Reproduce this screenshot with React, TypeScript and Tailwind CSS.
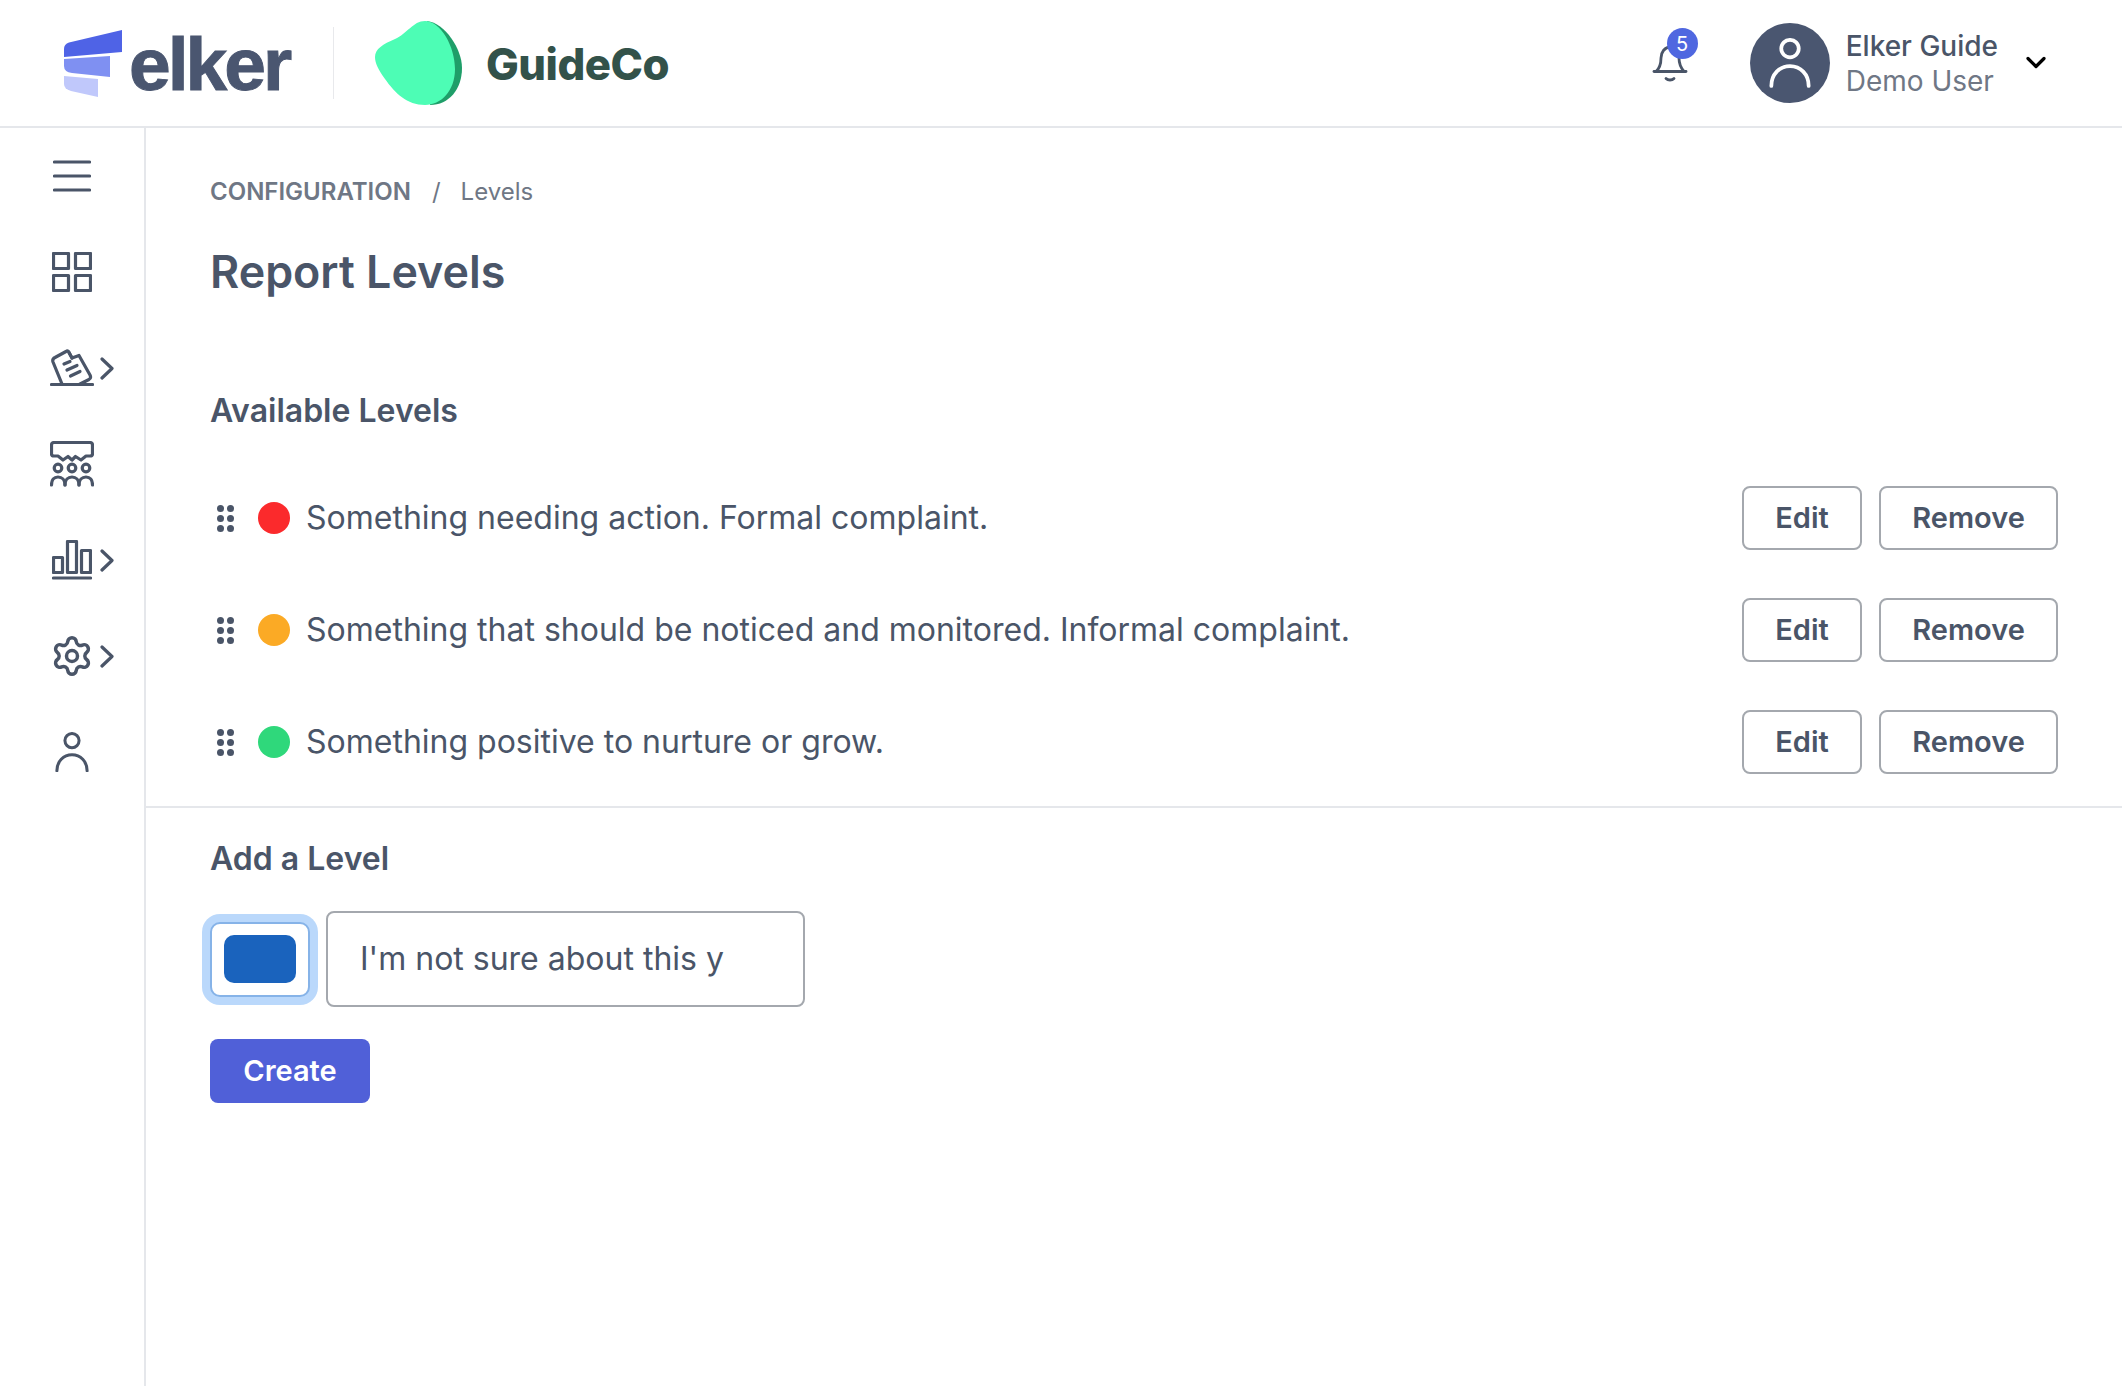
import * as React from 'react'
import { Settings } from 'lucide-react'

const levels = [
  { color: 'bg-[#fb2a2c]', label: 'Something needing action. Formal complaint.' },
  { color: 'bg-[#fbaa25]', label: 'Something that should be noticed and monitored. Informal complaint.' },
  { color: 'bg-[#2fd87b]', label: 'Something positive to nurture or grow.' },
]

const ink = '#4a5568'

function ElkerMark() {
  return (
    <svg width="58" height="67" viewBox="0 0 58 67" className="shrink-0">
      <path d="M58 0V22L0 27V19Q0 14 5 12.500Z" fill="#4f63e6" />
      <path d="M0 29L46 26V47L8 43Q0 42 0 36Z" fill="#7f90f2" />
      <path d="M0 46L34 49V67L7 61Q0 59 0 54Z" fill="#c0c8fb" />
    </svg>
  )
}

function Leaf() {
  return (
    <svg width="87" height="84" viewBox="0 0 87 84" className="shrink-0">
      <path d="M52 0C70 2 87 28 87 47C87 68 74 84 55 84Z" fill="#1f9e69" />
      <path d="M50 0C66 0 80 26 80 48C80 70 66 84 50 84C32 84 20 72 10 58C3 48 0 42 0 36C0 28 8 23 20 18C32 13 38 0 50 0Z" fill="#4dfdb5" />
    </svg>
  )
}

function Bell() {
  return (
    <svg width="36" height="36" viewBox="0 0 36 36" fill="none" stroke={ink} strokeWidth="2.800" strokeLinecap="round" strokeLinejoin="round">
      <path d="M2 25.500H34" />
      <path d="M4 25.500C8 22 9 18 9 12C9 6 13 1 18 1C23 1 27 6 27 12C27 18 29 22 32 25.500" />
      <path d="M14 32.500C16 34.500 20 34.500 22 32.500" />
    </svg>
  )
}

function PersonIcon({ size = 36, color = ink, width = 3.2 }: { size?: number; color?: string; width?: number }) {
  return (
    <svg width={size} height={size * 1.2} viewBox="0 0 36 43" fill="none" stroke={color} strokeWidth={width} strokeLinecap="round">
      <circle cx="18" cy="9" r="7.500" />
      <path d="M2 41C2 31 9 24 18 24C27 24 34 31 34 41" />
    </svg>
  )
}

function Chevron() {
  return (
    <svg width="14" height="23" viewBox="0 0 14 23" fill="none" stroke={ink} strokeWidth="3.200" strokeLinecap="round" strokeLinejoin="round" className="ml-[4px] shrink-0">
      <path d="M2 2L12 11.500L2 21" />
    </svg>
  )
}

function Hamburger() {
  return (
    <svg width="38" height="32" viewBox="0 0 38 32" fill="none" stroke={ink} strokeWidth="3.200" strokeLinecap="round">
      <path d="M1.500 2H36.500M1.500 16H36.500M1.500 30H36.500" />
    </svg>
  )
}

function GridIcon() {
  return (
    <svg width="40" height="40" viewBox="0 0 40 40" fill="none" stroke={ink} strokeWidth="3.200" strokeLinejoin="round">
      <rect x="1.500" y="1.500" width="15" height="15" />
      <rect x="23.500" y="1.500" width="15" height="15" />
      <rect x="1.500" y="23.500" width="15" height="15" />
      <rect x="23.500" y="23.500" width="15" height="15" />
    </svg>
  )
}

function DocIcon() {
  return (
    <svg width="44" height="38" viewBox="0 0 44 38" fill="none" stroke={ink} strokeWidth="3.200" strokeLinecap="round" strokeLinejoin="round">
      <path d="M1.500 35.500H42.500" />
      <path d="M12 35L3 13Q2 10 5 8.500L16 2.500Q18 1 19 3.500L22 9L29 6.500L40 26Q41.500 29 39 30.500L30 35" />
      <path d="M19 3.500L22 9" />
      <path d="M14 15L20 12.500M17 21L27 16.500M20.500 27L30 22.500" />
    </svg>
  )
}

function CrowdIcon() {
  return (
    <svg width="44" height="46" viewBox="0 0 44 46" fill="none" stroke={ink} strokeWidth="3.200" strokeLinecap="round" strokeLinejoin="round">
      <path d="M4 1.500H40Q42.500 1.500 42.500 4V13Q42.500 15 40 15H36L31 19L25.500 15.500L22 19L18 15.500L13 19L8 15H4Q1.500 15 1.500 13V4Q1.500 1.500 4 1.500Z" />
      <circle cx="8" cy="27" r="3.800" />
      <circle cx="22" cy="27" r="3.800" />
      <circle cx="36" cy="27" r="3.800" />
      <path d="M1.500 44C1.500 39 4 36 8 36C12 36 15 39 15 44" />
      <path d="M15 44C15 39 18 36 22 36C26 36 29 39 29 44" />
      <path d="M29 44C29 39 32 36 36 36C40 36 42.500 39 42.500 44" />
    </svg>
  )
}

function BarsIcon() {
  return (
    <svg width="40" height="40" viewBox="0 0 40 40" fill="none" stroke={ink} strokeWidth="3.200" strokeLinecap="round" strokeLinejoin="round">
      <rect x="1.500" y="17.500" width="9" height="15" />
      <rect x="15.500" y="1.500" width="9" height="31" />
      <rect x="29.500" y="10.500" width="9" height="22" />
      <path d="M1.500 38H38.500" />
    </svg>
  )
}

function DragDots() {
  return (
    <div className="grid grid-cols-[7px_7px] gap-[3px] shrink-0">
      {[0, 1, 2, 3, 4, 5].map(i => (
        <span key={i} className="h-[7px] w-[7px] rounded-full bg-[#4a5568]" />
      ))}
    </div>
  )
}

function NavItem({ children, arrow }: { children: React.ReactNode; arrow?: boolean }) {
  return (
    <div className="flex h-[96px] items-center pl-[48px]">
      <div className="flex w-[48px] shrink-0 items-center justify-center">{children}</div>
      {arrow && <Chevron />}
    </div>
  )
}

export default function App() {
  const [text, setText] = React.useState("I'm not sure about this y")

  return (
    <div className="flex h-screen flex-col overflow-hidden bg-white font-['Inter',sans-serif] text-[#4a5568]">
      <header className="flex h-[128px] shrink-0 items-center border-b-2 border-[#e5e7eb] pl-[64px]">
        <ElkerMark />
        <span className="mt-[2px] ml-[7px] w-[164px] font-['Liberation_Sans',sans-serif] text-[75px] leading-none font-bold tracking-[-3px] text-[#4a5670] [-webkit-text-stroke:1px_#4a5670]">elker</span>
        <div className="ml-[40px] h-[72px] w-[1px] bg-[#e8e9ec]" />
        <div className="ml-[41px]"><Leaf /></div>
        <span className="mt-[3px] ml-[24px] text-[43.700px] leading-none font-extrabold tracking-[-0.5px] text-[#33524a]">GuideCo</span>

        <div className="relative mt-[2px] ml-auto h-[36px] w-[36px]">
          <Bell />
          <span className="absolute top-[-18px] left-[15px] flex h-[31px] w-[31px] items-center justify-center rounded-full bg-[#4f67e0] text-[20px] leading-none text-white">5</span>
        </div>
        <div className="ml-[62px] flex h-[80px] w-[80px] items-center justify-center rounded-full bg-[#4a5670]">
          <PersonIcon size={42} color="#ffffff" width={3.2} />
        </div>
        <div className="mt-[1px] ml-[16px] flex flex-col">
          <span className="text-[28px] leading-[35px] font-medium text-[#4a5568]">Elker Guide</span>
          <span className="text-[28px] leading-[35px] text-[#6f7785]">Demo User</span>
        </div>
        <svg width="20" height="14" viewBox="0 0 20 14" fill="none" stroke="#000000" strokeWidth="3.200" strokeLinecap="round" strokeLinejoin="round" className="mr-[76px] ml-[28px]">
          <path d="M2 2.500L10 10.500L18 2.500" />
        </svg>
      </header>

      <div className="flex min-h-0 flex-1">
        <aside className="w-[146px] shrink-0 border-r-2 border-[#e5e7eb]">
          <NavItem><Hamburger /></NavItem>
          <NavItem><GridIcon /></NavItem>
          <NavItem arrow><DocIcon /></NavItem>
          <NavItem><CrowdIcon /></NavItem>
          <NavItem arrow><BarsIcon /></NavItem>
          <NavItem arrow><Settings size={44} strokeWidth={1.900} color={ink} /></NavItem>
          <NavItem><PersonIcon size={34} /></NavItem>
        </aside>

        <main className="min-w-0 flex-1">
          <section className="border-b-2 border-[#e5e7eb] pt-[46px] pr-[64px] pb-[8px] pl-[64px]">
            <div className="flex h-[36px] items-center text-[24px]">
              <span className="font-semibold text-[#6f7785] uppercase">Configuration</span>
              <span className="mx-[21px] text-[#6f7785]">/</span>
              <span className="ml-[-1px] text-[#6f7785]">Levels</span>
            </div>
            <h1 className="mt-[32px] text-[44.800px] leading-[60px] font-semibold">Report Levels</h1>
            <h2 className="mt-[89px] text-[32px] leading-[40px] font-semibold">Available Levels</h2>
            <ul className="mt-[31px]">
              {levels.map(level => (
                <li key={level.label} className="flex h-[112px] items-center">
                  <div className="ml-[7px]"><DragDots /></div>
                  <span className={`ml-[24px] h-[32px] w-[32px] shrink-0 rounded-full ${level.color}`} />
                  <span className="ml-[16px] text-[32px] leading-none">{level.label}</span>
                  <button className="ml-auto h-[64px] w-[120px] rounded-[8px] border-2 border-[#a4a8ae] text-[29px] font-semibold">Edit</button>
                  <button className="ml-[17px] h-[64px] w-[179px] rounded-[8px] border-2 border-[#a4a8ae] text-[29px] font-semibold">Remove</button>
                </li>
              ))}
            </ul>
          </section>

          <section className="pt-[31px] pl-[64px]">
            <h2 className="text-[32px] leading-[40px] font-semibold">Add a Level</h2>
            <div className="mt-[32px] flex items-center">
              <div className="flex h-[75px] w-[100px] items-center justify-center rounded-[10px] border-2 border-[#86b3e8] bg-white ring-8 ring-[#bad8fb]">
                <div className="h-[48px] w-[72px] rounded-[10px] bg-[#1a63bd]" />
              </div>
              <input
                value={text}
                onChange={e => setText(e.target.value)}
                className="ml-[16px] h-[96px] w-[479px] rounded-[8px] border-2 border-[#a4a8ae] px-[32px] pb-[2px] text-[32px] text-[#4a5568] outline-none"
              />
            </div>
            <button className="mt-[32px] h-[64px] w-[160px] rounded-[8px] bg-[#5060d8] text-[29px] font-semibold text-white">Create</button>
          </section>
        </main>
      </div>
    </div>
  )
}
